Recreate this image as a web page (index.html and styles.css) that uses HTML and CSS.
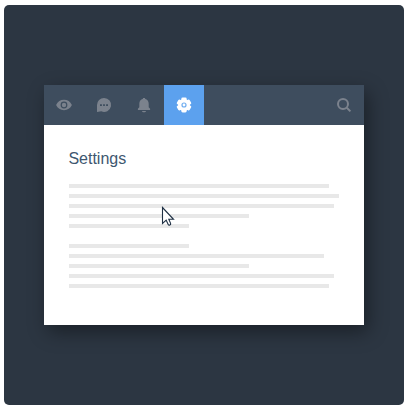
FILE: index.html
```html
<!DOCTYPE html>
<html lang="en">
<head>
<meta charset="utf-8">
<title>Settings</title>
<link rel="stylesheet" href="styles.css">
</head>
<body>
<main class="stage">
  <section class="card">
    <nav class="tabs">
      <a class="tab"><svg viewBox="0 0 40 40"><path fill-rule="evenodd" d="M20 14.8c3.5 0 6.4 1.9 7.9 5.2-1.5 3.3-4.4 5.2-7.9 5.2s-6.4-1.9-7.9-5.2c1.5-3.3 4.4-5.2 7.9-5.2zm0 1.8a3.4 3.4 0 1 0 0 6.8 3.4 3.4 0 0 0 0-6.8z"/><circle cx="20" cy="20" r="2.2"/></svg></a>
      <a class="tab"><svg viewBox="0 0 40 40"><path fill-rule="evenodd" d="M20.1 12.9a7 7 0 1 1-2.8 13.4L13 27v-7A7 7 0 0 1 20.1 12.9zM16 19.2v1.7h1.9v-1.7zm3.1 0v1.7h1.8v-1.7zm3 0v1.7H24v-1.7z"/></svg></a>
      <a class="tab"><svg viewBox="0 0 40 40"><path d="M19 13.8V13h2v.8c2.3.6 3.7 2.5 3.7 4.9v3.6l1.4 1.4v1.4H13.9v-1.4l1.4-1.4v-3.6c0-2.4 1.4-4.3 3.7-4.9zM18 25.9h4c0 .9-.8 1.3-2 1.3s-2-.4-2-1.3z"/></svg></a>
      <a class="tab active"><svg viewBox="0 0 40 40"><rect x="17.3" y="12.6" width="5.4" height="14.8" rx="1.4"/><rect x="17.3" y="12.6" width="5.4" height="14.8" rx="1.4" transform="rotate(60 20 20)"/><rect x="17.3" y="12.6" width="5.4" height="14.8" rx="1.4" transform="rotate(120 20 20)"/><circle cx="20" cy="20" r="5.9"/><circle class="hub" cx="20" cy="20" r="2"/></svg></a>
      <a class="tab search"><svg viewBox="0 0 40 40"><circle cx="19" cy="19" r="5"/><path d="M22.8 22.8L26.4 26.4"/></svg></a>
    </nav>
    <div class="content">
      <h1>Settings</h1>
      <div class="lines">
        <i class="w260"></i><i class="w270"></i><i class="w265"></i><i class="w180"></i><i class="w120"></i>
      </div>
      <div class="lines">
        <i class="w120"></i><i class="w255"></i><i class="w180"></i><i class="w265"></i><i class="w260"></i>
      </div>
    </div>
    <svg class="cursor" viewBox="0 0 14 21"><path d="M1.5 1.5v16l3.7-3.3 2 4.2c.7 1.4 2.9.6 2.4-1l-1.8-4.1h4.7z"/></svg>
  </section>
</main>
</body>
</html>
```

FILE: styles.css
```css
body {
  margin: 0;
  padding: 5px 6px 5px 4px;
  background: #fff;
  font-family: "Liberation Sans", Arial, sans-serif;
}
.stage {
  box-sizing: border-box;
  width: 400px;
  height: 400px;
  padding: 80px 40px;
  border-radius: 5px;
  background: #2c3642;
}
.card {
  position: relative;
  height: 240px;
  background: #fff;
  box-shadow: 4px 7px 18px rgba(0, 0, 0, 0.4);
}
.tabs {
  display: flex;
  height: 40px;
  background: #3e4d5e;
}
.tab {
  width: 40px;
  height: 40px;
  fill: #7b828d;
}
.tab svg {
  display: block;
}
.active {
  background: #5ca1ee;
  fill: #fff;
}
.hub {
  fill: #fff;
  stroke: #6fadf0;
  stroke-width: 1.2;
}
.search {
  margin-left: auto;
  fill: none;
  stroke: #7b828d;
  stroke-width: 2;
}
.content {
  padding: 24px 25px;
}
h1 {
  margin: 0 0 16px -0.6px;
  font-size: 16px;
  line-height: 19px;
  font-weight: 400;
  color: #3e5770;
}
.lines {
  display: flex;
  flex-direction: column;
  gap: 6px;
  margin-bottom: 16px;
}
.lines i {
  height: 4px;
  background: #e8e8e8;
}
.lines .w120 { width: 120px; }
.lines .w180 { width: 180px; }
.lines .w255 { width: 255px; }
.lines .w260 { width: 260px; }
.lines .w265 { width: 265px; }
.lines .w270 { width: 270px; }
.cursor {
  position: absolute;
  left: 117px;
  top: 121px;
  width: 14px;
  height: 21px;
  fill: #fff;
  stroke: #1f3044;
  stroke-width: 1.1;
}
```
